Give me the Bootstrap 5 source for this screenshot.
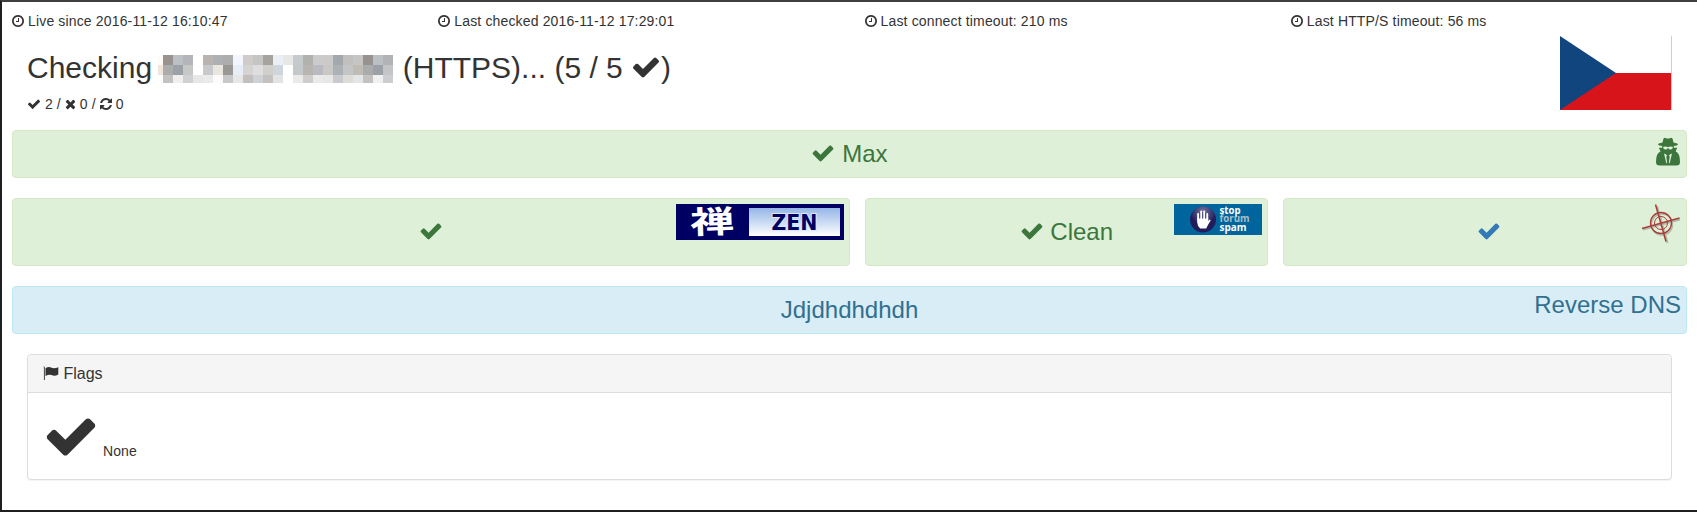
<!DOCTYPE html>
<html lang="en">
<head>
<meta charset="utf-8">
<title>Host check</title>
<link href="https://cdn.jsdelivr.net/npm/bootstrap@5.3.0/dist/css/bootstrap.min.css" rel="stylesheet">
<style>
body{font:14px/20px "Liberation Sans",Arial,sans-serif;color:#333;background:#fff}
.page-frame{height:512px;border:solid #1f1f21;border-width:2px 0 2px 2px;border-top-color:#413e40;padding:9px 10px 0 10px;overflow:hidden}
.stats{margin:0 -15px;height:24px;letter-spacing:.15px}
.stats>div{padding:0 15px}
.fa-i{fill:currentColor;height:1em;vertical-align:-.143em;overflow:visible}
.host{height:95px;padding:0 15px}
.host h2{font-size:30px;line-height:33px;margin:16px 0 0;font-weight:400;white-space:pre}
.host p{margin:10px 0 0;letter-spacing:.1px}
.mosaic{width:235px;height:28px;vertical-align:-5px;margin:0 1px 0 -2px}
.flag-cz{width:112px;height:74px;margin-top:1px}
.status{position:relative;border:1px solid #d6e9c6;border-radius:4px;background:#dff0d8;color:#3c763d;height:48px;font-size:24px;line-height:26px;padding:10px 15px;text-align:center;margin:0 0 20px}
.status.tall{height:68px;padding-top:20px}
.status.dns{background:#d9edf7;border-color:#bce8f1;color:#31708f}
.link-check{color:#337ab7;margin-left:7px}
.gap-col{padding-left:15px}
.corner{position:absolute;top:5px;right:5px}
svg.corner{display:block}
.flags{margin:0 15px;border:1px solid #ddd;border-radius:4px;box-shadow:0 1px 1px rgba(0,0,0,.05);height:126px}
.flags .card-header{background:#f5f5f5;border-color:#ddd;height:38px;padding:10px 15px;font-size:16px;line-height:18px;box-sizing:border-box}
.flags .card-body{padding:15px;letter-spacing:.1px}
.big{font-size:56px}
</style>
</head>
<body>
<svg class="d-none">
<symbol id="check" viewBox="0 0 1792 1792"><path d="M1671 566q0 40-28 68l-724 724-136 136q-28 28-68 28t-68-28l-136-136-362-362q-28-28-28-68t28-68l136-136q28-28 68-28t68 28l294 295 656-657q28-28 68-28t68 28l136 136q28 28 28 68z"/></symbol>
<symbol id="clock" viewBox="128 0 1536 1792"><path d="M1024 544v448q0 14-9 23t-23 9h-320q-14 0-23-9t-9-23v-64q0-14 9-23t23-9h224v-352q0-14 9-23t23-9h64q14 0 23 9t9 23zm416 352q0-148-73-273t-198-198-273-73-273 73-198 198-73 273 73 273 198 198 273 73 273-73 198-198 73-273zm224 0q0 209-103 385.5t-279.5 279.5-385.5 103-385.5-103-279.5-279.5-103-385.5 103-385.5 279.5-279.5 385.5-103 385.5 103 279.5 279.5 103 385.5z"/></symbol>
</svg>
<div class="page-frame">
  <div class="row stats gx-0">
    <div class="col-3"><svg class="fa-i" width="12"><use href="#clock"/></svg> Live since 2016-11-12 16:10:47</div>
    <div class="col-3"><svg class="fa-i" width="12"><use href="#clock"/></svg> Last checked 2016-11-12 17:29:01</div>
    <div class="col-3"><svg class="fa-i" width="12"><use href="#clock"/></svg> Last connect timeout: 210 ms</div>
    <div class="col-3"><svg class="fa-i" width="12"><use href="#clock"/></svg> Last HTTP/S timeout: 56 ms</div>
  </div>
  <div class="host d-flex justify-content-between">
    <div>
      <h2>Checking <svg class="mosaic" id="mosaic" viewBox="0 0 235 28" shape-rendering="crispEdges"></svg> (HTTPS)... (5 / 5 <svg class="fa-i" width="30"><use href="#check"/></svg>)</h2>
      <p><svg class="fa-i" width="14"><use href="#check"/></svg> 2 / <svg class="fa-i" width="11" viewBox="192 0 1408 1792"><path d="M1490 1322q0 40-28 68l-136 136q-28 28-68 28t-68-28l-294-294-294 294q-28 28-68 28t-68-28l-136-136q-28-28-28-68t28-68l294-294-294-294q-28-28-28-68t28-68l136-136q28-28 68-28t68 28l294 294 294-294q28-28 68-28t68 28l136 136q28 28 28 68t-28 68l-294 294 294 294q28 28 28 68z"/></svg> 0 / <svg class="fa-i" width="12" viewBox="128 0 1536 1792"><path d="M1639 1056q0 5-1 7-64 268-268 434.5t-478 166.5q-146 0-282.5-55t-243.5-157l-129 129q-19 19-45 19t-45-19-19-45v-448q0-26 19-45t45-19h448q26 0 45 19t19 45-19 45l-137 137q71 66 161 102t187 36q134 0 250-65t186-179q11-17 53-117 8-23 30-23h192q13 0 22.5 9.5t9.5 22.5zm25-800v448q0 26-19 45t-45 19h-448q-26 0-45-19t-19-45 19-45l138-138q-148-137-349-137-134 0-250 65t-186 179q-11 17-53 117-8 23-30 23h-199q-13 0-22.5-9.5t-9.5-22.5v-7q65-268 270-434.5t480-166.5q146 0 284 55.5t245 156.5l130-129q19-19 45-19t45 19 19 45z"/></svg> 0</p>
    </div>
    <svg class="flag-cz" viewBox="0 0 112 74"><path fill="#fff" d="M0 0h112v37H0z"/><path fill="#d7141a" d="M0 37h111v37H0z"/><path fill="#f5bcc0" d="M111 0h1v74h-1z"/><path fill="#11457e" d="M0 0l56 37L0 74z"/></svg>
  </div>
  <div class="status"><svg class="fa-i" width="24"><use href="#check"/></svg> Max
    <svg class="corner" width="26" height="30" viewBox="0 0 26 30" fill="#3c763d"><path d="M8.500 2.500Q9.500 1.300 11 2.200q2 .8 4 0 1.500-.9 2.500.3L18.500 6.500q4 .7 4.500 1.900-.5 1.100-4.300 1.700l.2 1.700h3.200l-1.400 3.700Q25 17 25 26q0 3.500-3.500 3.500h-17Q1 29.500 1 26q0-9 4.500-10.500l-1.600-3.700h3.200l.2-1.700Q3.500 9.500 3 8.400 3.500 7.200 7.500 6.500z"/><path fill="#dff0d8" d="M8 11q2.500-.8 4.500 0h1q2-.8 4.500 0-.4 2.600-2.800 2.600-1.500 0-1.900-1.700h-.6q-.4 1.700-1.900 1.700Q8.400 13.600 8 11zM9 17.500l3 1.500-.7 2 .8 5-.6 2zM17 17.500l-3 1.500.7 2-.8 5 .6 2z"/></svg>
  </div>
  <div class="d-flex">
    <div class="col-6"><div class="status tall"><svg class="fa-i" width="24"><use href="#check"/></svg>
      <svg class="corner" width="168" height="36" viewBox="0 0 168 36"><defs><linearGradient id="sky" x2="0" y2="1"><stop stop-color="#94b5e7"/><stop offset="1" stop-color="#fff"/></linearGradient></defs><path fill="#000063" d="M0 0h168v36H0z"/><path fill="url(#sky)" d="M73 4h91v28H73z"/><text x="14" y="29" font-family="'Noto Sans CJK JP',sans-serif" font-size="31" font-weight="700" fill="#fff" textLength="44" lengthAdjust="spacingAndGlyphs" transform="rotate(-2 36 18)">禅</text><text x="95.500" y="26" font-family="DejaVu Sans,sans-serif" font-size="21" font-weight="700" fill="#000063" stroke="#dce7f7" stroke-width="2" paint-order="stroke" textLength="46" lengthAdjust="spacingAndGlyphs">ZEN</text></svg>
    </div></div>
    <div class="col-3 gap-col"><div class="status tall"><svg class="fa-i" width="24"><use href="#check"/></svg> Clean
      <svg class="corner" width="88" height="31" viewBox="0 0 88 31"><defs><radialGradient id="orb" cy=".2"><stop stop-color="#77749f"/><stop offset="1" stop-color="#211d5c"/></radialGradient></defs><path fill="#00659c" d="M0 0h88v31H0z"/><circle cx="29" cy="15.500" r="13" fill="url(#orb)"/><g stroke="#fff" stroke-width="2" stroke-linecap="round" fill="#fff"><path d="M24.200 16V10M27.200 15V7.500M30.200 15V7.500M33.200 16V10"/><path stroke="none" d="M23.200 14h11v3l1.500-1.500 1 .8-3 5.200-1.500 3h-6q-3-3-3-6z"/></g><path stroke="#211d5c" stroke-width=".5" d="M25.700 9v6M28.700 8v7M31.700 9v6"/><g font-family="Open Sans,sans-serif" font-weight="700" font-size="10"><text x="45.500" y="9.500" fill="#fff" textLength="21" lengthAdjust="spacingAndGlyphs">stop</text><text x="45.500" y="18.200" fill="#a9bfca" textLength="30" lengthAdjust="spacingAndGlyphs">forum</text><text x="45.500" y="26.500" fill="#fff" textLength="27" lengthAdjust="spacingAndGlyphs">spam</text></g></svg>
    </div></div>
    <div class="col-3 gap-col"><div class="status tall"><svg class="fa-i link-check" width="24"><use href="#check"/></svg>
      <svg class="corner" width="42" height="42" viewBox="0 0 42 42" fill="none"><g stroke="#777" opacity=".45" transform="translate(1 1)"><circle cx="22" cy="19.500" r="10.500" stroke-width="1.500"/><path stroke-width="2" d="M17 1l10.500 37M3 24.500l37-10"/></g><g stroke="#a93d38"><circle cx="22" cy="19" r="10.500" stroke-width="1.300"/><circle cx="22" cy="19" r="6.500"/><path stroke-width="1.500" d="M16.500 .5l10.500 37M3 24.500l37.500-10.500"/></g></svg>
    </div></div>
  </div>
  <div class="status dns">Jdjdhdhdhdh<span class="corner">Reverse DNS</span></div>
  <div class="card flags">
    <div class="card-header"><svg class="fa-i" width="16" height="16" viewBox="0 0 16 16"><path d="M.6 1.500a1 1 0 0 1 1.200 1V15H.9V2.800zM2.500 3.300Q5.500 1.300 8 2.500q3 1.500 7.300-.3v7.300q-3.500 2-6.800.6-2.500-1-6 1z"/></svg> Flags</div>
    <div class="card-body"><svg class="fa-i big" width="56"><use href="#check"/></svg> None</div>
  </div>
</div>
<script src="https://cdn.jsdelivr.net/npm/bootstrap@5.3.0/dist/js/bootstrap.bundle.min.js"></script>
<script>
// Pixelated cells that hide the host name, three rows of colours
const cells = [
 'fffaf7 989390 bbc0c4 b3b5b8 ffffff bab4b0 aeb0b3 adadad f3f7fd cfcbc9 c5c5c5 a6a39f e9eff4 e7e7e5 c5cacd b1b1ae cacccb cbcac8 a2a8ac c1c0bf c5c5c5 969290 bbc0c3 b1b3b6',
 'f2e5dc aaadac 9ca0a7 c5c8c7 ffffff c8c9ca e8e6df 9a9795 e8eef7 d5d4d3 dedede d0cfcb cfd5dc ffffff c4c8ca b7b4b1 b9bbc0 c9c8c4 abb1b4 c5c5c5 bebcb4 aaacab 9ca1a7 c3c5c6',
 'ffffff c3c2c0 f0efed ced0d2 e7e7e8 eaeaea fcfbf9 c7c8ca e7e7e8 c3bfbd ced2d5 c4c2c0 e3e3e6 ffffff eaeaeb cfcdcb ebeae8 e6e8e8 c8cacd dddcd9 e2e6e9 c3c2c1 f0f0f0 cccdd0'
];
document.getElementById('mosaic').innerHTML = cells.map((row, y) => row.split(' ').map((c, i) =>
 `<rect x="${i ? i * 10 - 5 : 0}" y="${y * 10}" width="${i ? 10 : 5}" height="${y == 2 ? 8 : 10}" fill="#${c}"/>`).join('')).join('');
</script>
</body>
</html>
